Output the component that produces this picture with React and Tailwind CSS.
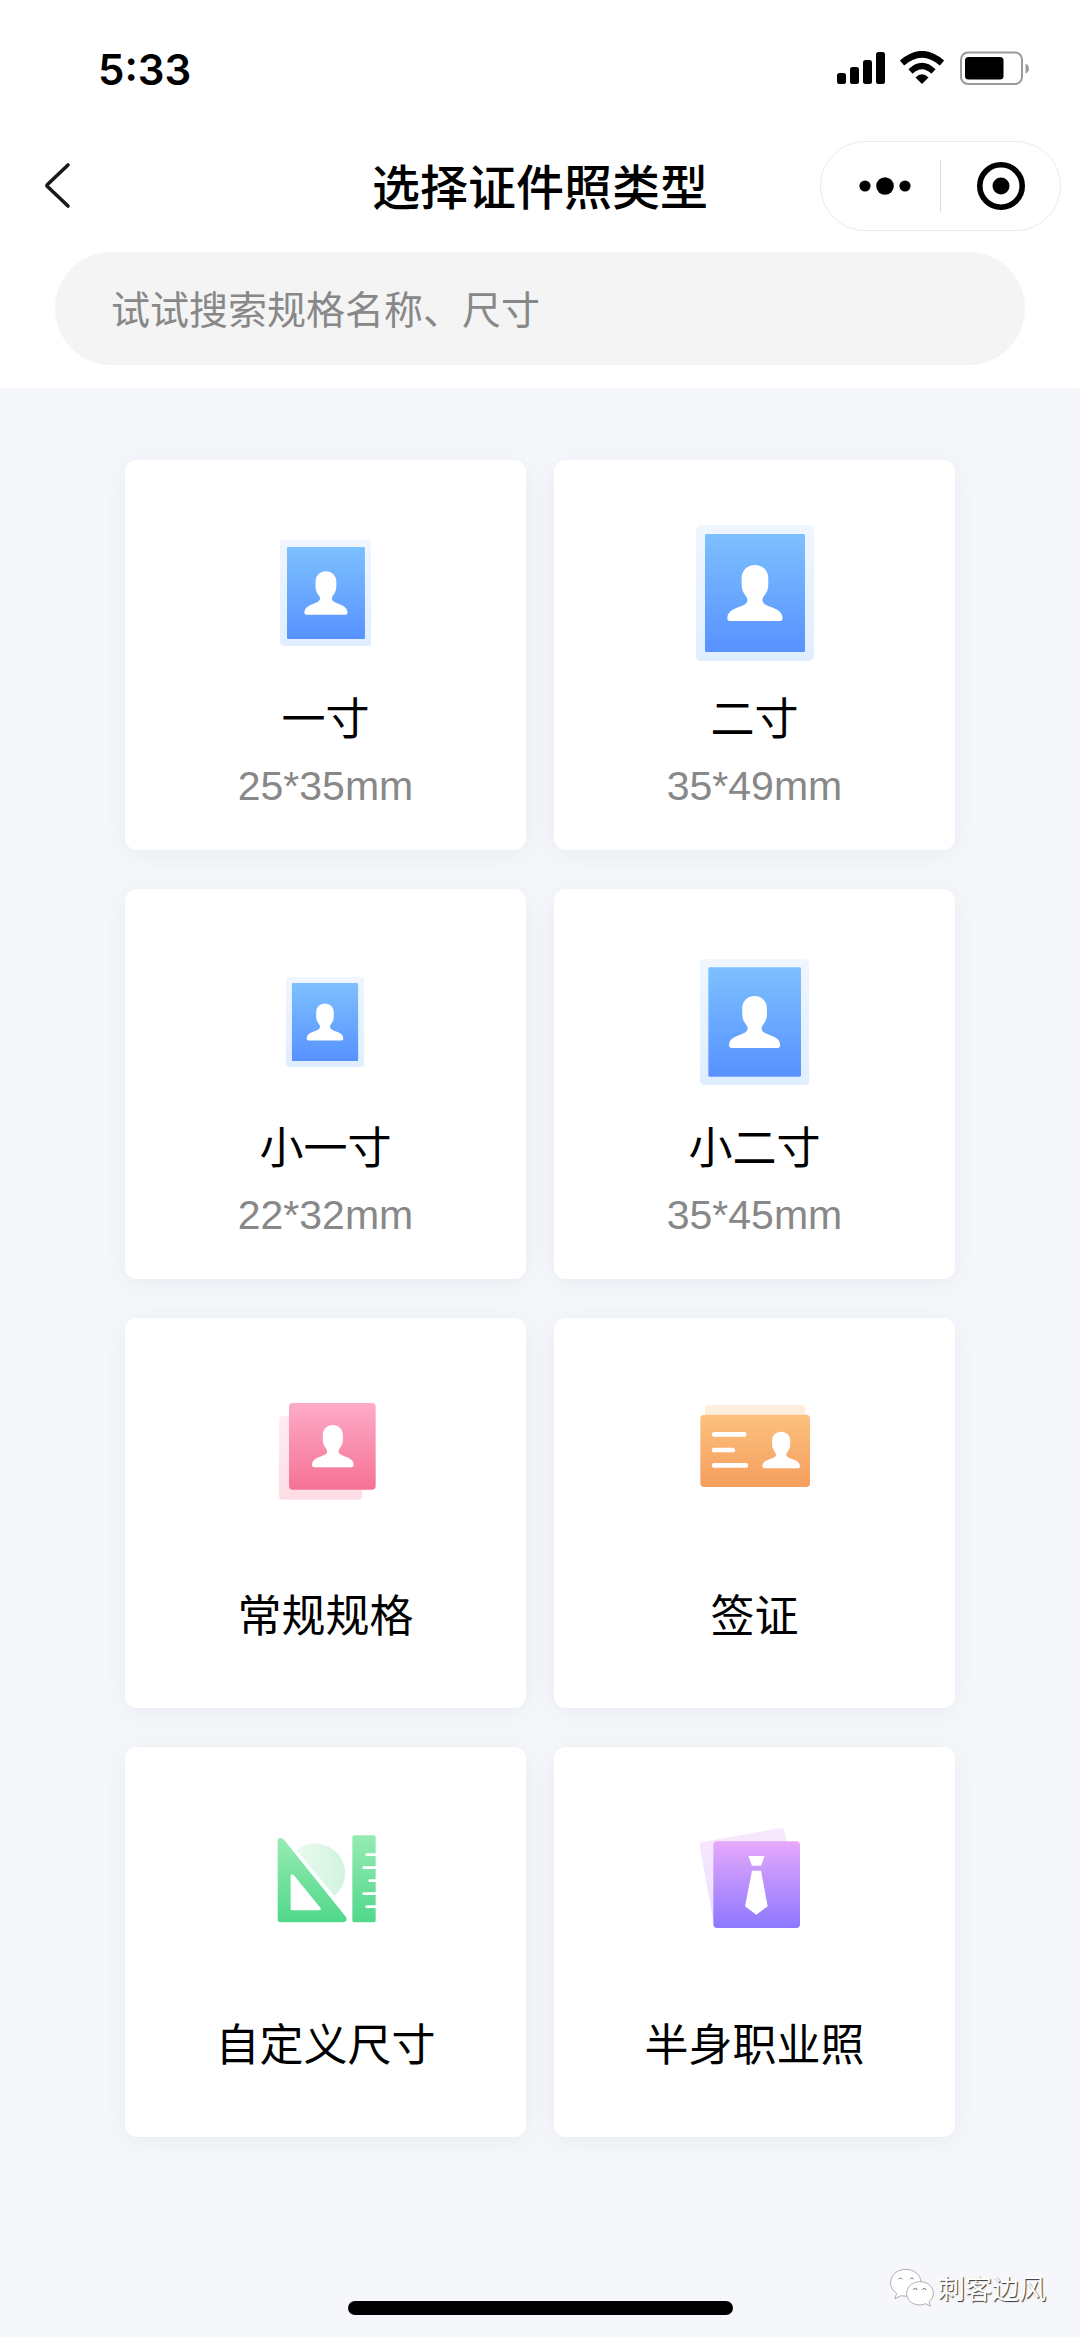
import React, { useState } from 'react';

const photoSizes = [
  { name: '一寸', size: '25*35mm', icon: <PhotoIcon className="h-[106px]" /> },
  { name: '二寸', size: '35*49mm', icon: <PhotoIcon className="h-[136px]" /> },
  { name: '小一寸', size: '22*32mm', icon: <PhotoIcon className="h-[90px]" /> },
  { name: '小二寸', size: '35*45mm', icon: <PhotoIcon className="h-[126px]" /> },
];

const categories = [
  { name: '常规规格', icon: <StandardIcon /> },
  { name: '签证', icon: <VisaIcon /> },
  { name: '自定义尺寸', icon: <CustomIcon /> },
  { name: '半身职业照', icon: <BusinessIcon /> },
];

function Gradient({ id, from, to, horizontal }) {
  return (
    <linearGradient id={id} x1="0" y1="0" x2={horizontal ? 1 : 0} y2={horizontal ? 0 : 1}>
      <stop stopColor={from} />
      <stop offset="1" stopColor={to} />
    </linearGradient>
  );
}

// Head and shoulders, drawn in a 166x168 box
function Person({ transform }) {
  return (
    <path
      transform={transform}
      fill="#fff"
      d="M83 0C106 0 123 17 123 40V58C123 76 117 84 110 94C103 104 104 112 115 119C140 131 166 134 166 160Q166 168 158 168H8Q0 168 0 160C0 134 26 131 51 119C62 112 63 104 56 94C49 84 43 76 43 58V40C43 17 60 0 83 0Z"
    />
  );
}

function PhotoIcon({ className }) {
  return (
    <svg className={className} viewBox="0 0 118 136" aria-hidden="true">
      <defs>
        <Gradient id="photoFrame" from="#eff6ff" to="#e0eeff" />
        <Gradient id="photoFill" from="#7dc0ff" to="#5792ff" />
      </defs>
      <rect width="118" height="136" rx="5" fill="url(#photoFrame)" />
      <rect x="9" y="9" width="100" height="118" rx="1.5" fill="url(#photoFill)" />
      <Person transform="translate(31.3 40) scale(.333)" />
    </svg>
  );
}

function StandardIcon() {
  return (
    <svg className="h-[120px] w-[120px]" viewBox="46 63 360 360" aria-hidden="true">
      <defs>
        <Gradient id="pinkBack" from="#ffebf2" to="#fddde4" />
        <Gradient id="pinkFill" from="#fdabc8" to="#f67294" />
      </defs>
      <rect x="85" y="139" width="250" height="250" rx="12" fill="url(#pinkBack)" />
      <rect x="115" y="99" width="260" height="260" rx="11" fill="url(#pinkFill)" />
      <Person transform="translate(184 165) scale(.753)" />
    </svg>
  );
}

function VisaIcon() {
  return (
    <svg className="h-[120px] w-[120px]" viewBox="75 63 360 360" aria-hidden="true">
      <defs>
        <Gradient id="orangeFill" from="#fcc17f" to="#f59d5d" />
      </defs>
      <rect x="105" y="105" width="301" height="60" rx="11" fill="#feeedd" />
      <rect x="91" y="134" width="329" height="217" rx="12" fill="url(#orangeFill)" />
      <rect x="126" y="186" width="103" height="14" rx="5" fill="#fff" />
      <rect x="126" y="233" width="69" height="14" rx="5" fill="#fff" />
      <rect x="126" y="279" width="108" height="14" rx="5" fill="#fff" />
      <Person transform="translate(277 185) scale(.68 .653)" />
    </svg>
  );
}

function CustomIcon() {
  return (
    <svg className="h-[120px] w-[120px]" viewBox="46 59 360 360" aria-hidden="true">
      <defs>
        <Gradient id="greenBack" from="#e8faee" to="#d2f3df" horizontal />
        <Gradient id="greenFill" from="#97ebb3" to="#50d88a" />
      </defs>
      <path d="M138 150A88 88 0 1 1 251 287Z" fill="url(#greenBack)" />
      <path
        fillRule="evenodd"
        fill="url(#greenFill)"
        d="M81 122Q81 114 89 113Q95 113 100 118L286 350Q289 355 287 360Q284 366 278 366H90Q81 366 81 357ZM120 225V326Q120 330 124 330H206Q213 328 209 322L129 224Q123 219 120 225Z"
      />
      <rect x="305" y="105" width="70" height="261" rx="6" fill="url(#greenFill)" />
      <path
        d="M348 163H376M339 202H376M357 241H376M339 280H376M348 319H376"
        stroke="#fff"
        strokeWidth="8"
        strokeLinecap="round"
      />
    </svg>
  );
}

function BusinessIcon() {
  return (
    <svg className="h-[120px] w-[120px]" viewBox="75 59 360 360" aria-hidden="true">
      <defs>
        <Gradient id="purpleBack" from="#f9e8fd" to="#e8e0ff" />
        <Gradient id="purpleFill" from="#e6a8fb" to="#8d78ff" />
      </defs>
      <path d="M89 137Q87 127 98 125L331 83Q341 81 343 90L352 140L140 370L131 365Z" fill="url(#purpleBack)" />
      <rect x="130" y="123" width="260" height="260" rx="11" fill="url(#purpleFill)" />
      <path d="M235 167H284L273 196H246ZM246 211H273L293 318L259 343L225 318Z" fill="#fff" />
    </svg>
  );
}

function StatusBar() {
  return (
    <div className="flex h-[138px] items-center justify-between pr-[50px] pl-[98px]">
      <span className="font-['Inter',sans-serif] text-[42px] font-semibold">5:33</span>
      <svg className="h-[36px] w-[194px]" viewBox="836 51 194 36" aria-hidden="true">
        <rect x="837" y="73" width="9" height="11" rx="2.5" />
        <rect x="850" y="67" width="9" height="17" rx="2.5" />
        <rect x="863" y="60" width="9" height="24" rx="2.5" />
        <rect x="876" y="52" width="9" height="32" rx="2.5" />
        <path d="M902 63Q922 45.5 942 63" fill="none" stroke="#000" strokeWidth="6.5" />
        <path d="M910.5 71.5Q922 60.5 933.5 71.5" fill="none" stroke="#000" strokeWidth="6" />
        <path d="M915.5 77.5Q922 71 928.5 77.5L922 84Z" />
        <rect x="961" y="52.5" width="61" height="31.5" rx="7" fill="none" stroke="#9b9b9b" strokeWidth="2" />
        <rect x="965" y="57" width="38.5" height="22.5" rx="3.5" />
        <path d="M1025.5 63.5Q1029 65 1029 68.5T1025.5 73.5Z" fill="#9b9b9b" />
      </svg>
    </div>
  );
}

function NavBar() {
  return (
    <div className="grid h-24 grid-cols-[1fr_auto_1fr] items-center px-[19px]">
      <button type="button" aria-label="返回" className="flex h-20 w-20 items-center pl-6">
        <svg className="h-12 w-8" viewBox="0 0 32 48" fill="none" stroke="#1a1a1a" strokeWidth="3.6" strokeLinecap="round" strokeLinejoin="round" aria-hidden="true">
          <path d="M25 3L4.5 22.5Q3.5 23.5 4.5 24.5L25 44" />
        </svg>
      </button>
      <h1 className="pb-1 text-[48px] leading-[64px] font-medium">选择证件照类型</h1>
      <div className="flex h-[90px] w-[241px] items-center justify-self-end rounded-full border border-[#ebebeb]">
        <button type="button" aria-label="更多" className="flex w-[119px] justify-center pl-2">
          <svg className="h-5 w-[52px]" viewBox="0 0 52 20" aria-hidden="true">
            <circle cx="6" cy="10" r="5.6" />
            <circle cx="26" cy="10" r="8.8" />
            <circle cx="46" cy="10" r="5.6" />
          </svg>
        </button>
        <span className="h-[52px] w-px bg-[#dcdcdc]" />
        <button type="button" aria-label="关闭" className="flex flex-1 justify-center">
          <svg className="h-[50px] w-[50px]" viewBox="0 0 50 50" aria-hidden="true">
            <circle cx="25" cy="25" r="21.2" fill="none" stroke="#000" strokeWidth="5.6" />
            <circle cx="25" cy="25" r="8.5" />
          </svg>
        </button>
      </div>
    </div>
  );
}

function TypeCard({ name, size, icon }) {
  return (
    <button
      type="button"
      className="flex flex-col items-center rounded-xl bg-white pt-16 pb-9 shadow-[0_4px_24px_rgba(60,70,90,0.07)]"
    >
      <span className="flex h-[138px] items-center justify-center">{icon}</span>
      {size ? (
        <>
          <span className="mt-[22px] text-[44px] leading-[64px]">{name}</span>
          <span className="mt-[10px] font-['Liberation_Sans',sans-serif] text-[41px] leading-[56px] text-[#888888]">
            {size}
          </span>
        </>
      ) : (
        <span className="mt-[61px] mb-[27px] text-[44px] leading-[64px]">{name}</span>
      )}
    </button>
  );
}

function Watermark() {
  return (
    <div className="absolute right-[34px] bottom-[29px] flex items-center gap-1">
      <svg className="h-10 w-11" viewBox="0 0 132 120" aria-hidden="true">
        <g fill="#fff" stroke="#8a8a8a" strokeWidth="2">
          <path d="M47 4C22 4 2 21 2 44C2 58 9 69 20 76L15 92L34 83Q42 85 52 84C70 84 93 66 93 43C93 21 72 4 47 4Z" />
          <path d="M90 41C67 41 50 56 50 76C50 96 67 111 90 111Q100 111 107 107L121 114L117 101C125 95 130 87 130 76C130 56 113 41 90 41Z" />
        </g>
        <g fill="none" stroke="#777" strokeWidth="3">
          <path d="M26 34A6 6 0 0 1 37 34M60 34A6 6 0 0 1 71 34M71 66A5 5 0 0 1 81 66M98 66A5 5 0 0 1 108 66" />
        </g>
      </svg>
      <span className="text-[27px] leading-10 text-white [text-shadow:1px_1px_1px_#333]">刺客边风</span>
    </div>
  );
}

export default function App() {
  const [keyword, setKeyword] = useState('');

  return (
    <div className="relative flex min-h-screen flex-col bg-[#f5f7fb] font-['Noto_Sans_CJK_SC',sans-serif] text-black">
      <header className="bg-white pb-[23px]">
        <StatusBar />
        <NavBar />
        <div className="px-[55px] pt-[18px]">
          <input
            type="search"
            aria-label="搜索规格"
            value={keyword}
            onChange={(e) => setKeyword(e.target.value)}
            placeholder="试试搜索规格名称、尺寸"
            className="block h-[113px] w-full rounded-full bg-[#f4f4f4] px-14 pb-1 text-[39px] outline-none placeholder:text-[#888888]"
          />
        </div>
      </header>

      <main className="grid grid-cols-2 gap-x-7 gap-y-[39px] px-[125px] pt-[72px] pb-20">
        {[...photoSizes, ...categories].map((item) => (
          <TypeCard key={item.name} {...item} />
        ))}
      </main>

      <footer className="mt-auto flex justify-center pb-[22px]">
        <div className="h-[14px] w-[385px] rounded-full bg-black" />
      </footer>
      <Watermark />
    </div>
  );
}
